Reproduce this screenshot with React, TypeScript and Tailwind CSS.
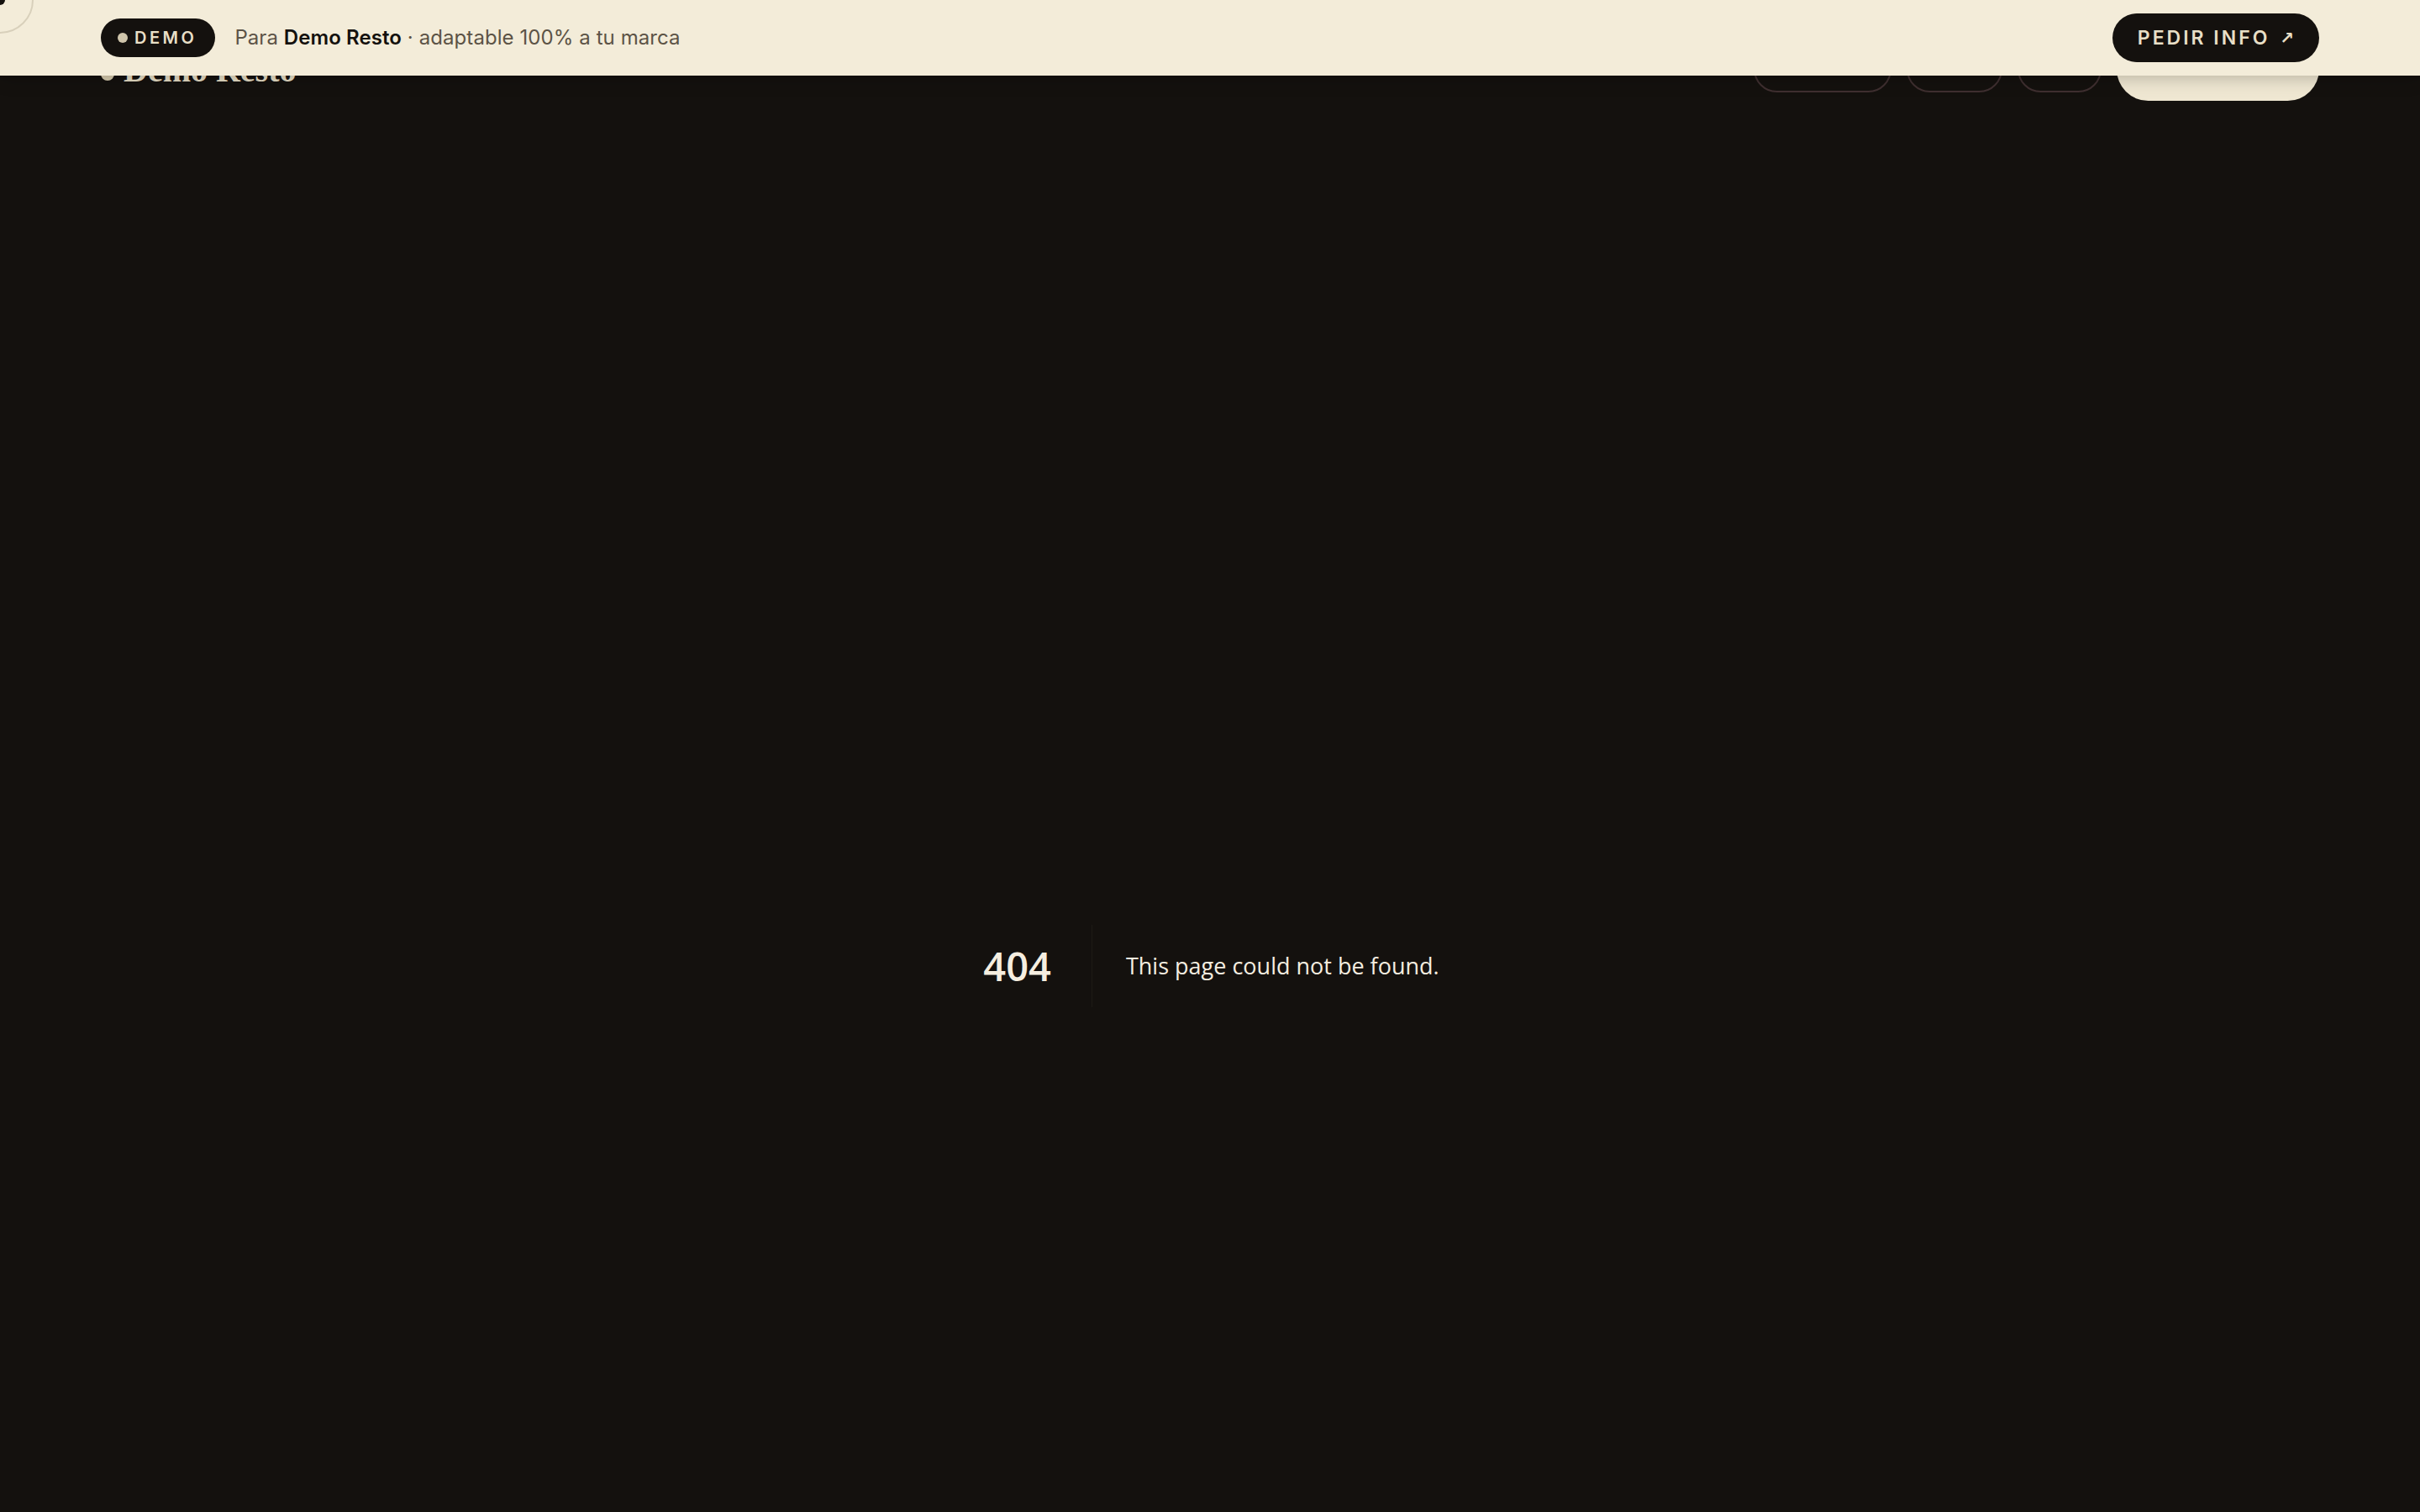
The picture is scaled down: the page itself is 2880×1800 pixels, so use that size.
export default function App() {
  const links = ["Menú", "Ambientes", "Galería", "Reservas", "Contacto"];
  return (
    <div className="relative h-[1800px] overflow-hidden bg-[#14110e] font-['Inter',sans-serif]">
      <header className="flex h-[164px] items-center justify-between px-[120px]">
        <div className="mt-[4px] flex w-[232px] items-center gap-[11px] whitespace-nowrap text-[#e8dfc6]">
          <span className="mt-[8px] h-[16px] w-[16px] shrink-0 rounded-full bg-[#d8cdb0]" />
          <span className="font-['Liberation_Serif',serif] text-[40px] font-bold leading-none">Demo Resto</span>
        </div>
        <nav className="ml-[34px] flex items-center gap-[62px] text-[24px] text-[#cfc6ae]">
          {links.map((l) => (
            <a key={l}>{l}</a>
          ))}
        </nav>
        <div className="flex items-center gap-[18px]">
          <span className="h-[55px] w-[164px] rounded-full border-2 border-[#3f2f30]" />
          <span className="h-[55px] w-[114px] rounded-full border-2 border-[#3f2f30]" />
          <span className="h-[55px] w-[100px] rounded-full border-2 border-[#3f2f30]" />
          <span className="h-[75px] w-[241px] rounded-full bg-[#efe7d2]" />
        </div>
      </header>
      <main className="box-border flex h-[1636px] items-center justify-center pt-[336px]">
        <div className="ml-[3px] flex items-center font-['Open_Sans',sans-serif] text-[#f5eee0]">
          <h1 className="mr-[40px] h-[98px] border-r border-[#1d1a16] pr-[48px] text-[47px] font-semibold leading-[98px]">404</h1>
          <h2 className="text-[27px]">This page could not be found.</h2>
        </div>
      </main>
      <div className="absolute left-0 right-0 top-0 flex h-[90px] items-center justify-between bg-[#f3ecd9] px-[120px] shadow-[0_2px_20px_rgba(0,0,0,0.25)]">
        <div className="flex items-center gap-[23px]">
          <span className="flex h-[46px] items-center gap-[8px] rounded-full bg-[#14110e] pl-[20px] pr-[22px] text-[20px] font-semibold tracking-[3.5px] text-[#e8dfc6]">
            <span className="h-[12px] w-[12px] rounded-full bg-[#cfc5ab]" />
            DEMO
          </span>
          <span className="text-[24px] tracking-[0.08px] text-[#5c5346]">
            Para <b className="font-semibold text-[#14110e]">Demo Resto</b> · adaptable 100% a tu marca
          </span>
        </div>
        <span className="flex h-[58px] w-[246px] items-center justify-center rounded-full bg-[#14110e] text-[23px] font-semibold tracking-[3px] text-[#e8dfc6]">
          PEDIR INFO <span className="ml-[12px] font-['DejaVu_Sans',sans-serif] text-[20px] tracking-normal">↗</span>
        </span>
      </div>
      <div className="absolute left-[-40px] top-[-40px] h-[80px] w-[80px] rounded-full border-2 border-[#d8d0bb]" />
      <div className="absolute left-[-6px] top-[-6px] h-[12px] w-[12px] rounded-full bg-[#14110e]" />
    </div>
  );
}
